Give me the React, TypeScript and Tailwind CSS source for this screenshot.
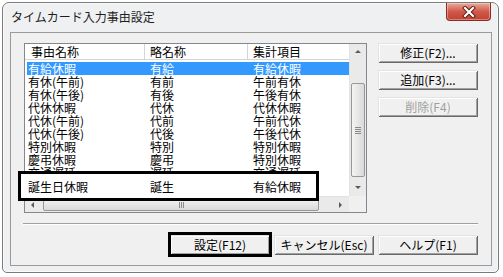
import type { ReactNode } from "react";

const rows: [string, string, string][] = [
  ["有給休暇", "有給", "有給休暇"],
  ["有休(午前)", "有前", "午前有休"],
  ["有休(午後)", "有後", "午後有休"],
  ["代休休暇", "代休", "代休休暇"],
  ["代休(午前)", "代前", "午前代休"],
  ["代休(午後)", "代後", "午後代休"],
  ["特別休暇", "特別", "特別休暇"],
  ["慶弔休暇", "慶弔", "特別休暇"],
  ["交通遅延", "遅延", "交通遅延"],
  ["誕生日休暇", "誕生", "有給休暇"],
  ["", "", ""],
];

function Btn({ children, disabled }: { children: ReactNode; disabled?: boolean }) {
  return (
    <button
      className={
        "w-[100px] h-[20px] flex items-center justify-center bg-[#f0f0f0] text-[12px] leading-none shadow-[inset_1px_1px_0_#e3e3e3,inset_-1px_-1px_0_#696969,inset_2px_2px_0_#ffffff,inset_-2px_-2px_0_#a0a0a0] " +
        (disabled ? "text-[#a0a0a0]" : "text-black")
      }
    >
      {children}
    </button>
  );
}

function Arrow({ dir }: { dir: "up" | "down" | "left" | "right" }) {
  const pts = {
    up: "1,5 4,2 7,5",
    down: "1,2 4,5 7,2",
    left: "5,1 2,4 5,7",
    right: "2,1 5,4 2,7",
  }[dir];
  return (
    <svg width="8" height="8" viewBox="0 0 8 8">
      <polygon points={pts} fill="#5a5a5a" />
    </svg>
  );
}

export default function App() {
  return (
    <div className="w-[503px] h-[277px] bg-white pt-[2px] pl-[2px] font-['Noto_Sans_CJK_JP',sans-serif] text-black">
      <div className="w-[497px] h-[271px] rounded-t-[7px] rounded-b-[5px] border border-[#7b7b7b] bg-[#eff0f2] flex flex-col shadow-[inset_0_0_0_1px_#fafafa]">
        {/* title bar */}
        <div className="h-[29px] flex items-start justify-between shrink-0">
          <div className="pl-[8px] pt-[5px] text-[12px] leading-[18px] text-[#1e1e1e]">タイムカード入力事由設定</div>
          <div className="mr-[7px] w-[45px] h-[18px] rounded-b-[4px] border border-t-0 border-[#8c2b22] bg-gradient-to-b from-[#e9a99c] via-[#d0594a] to-[#c24132] flex items-center justify-center shadow-[inset_0_0_0_1px_rgba(255,255,255,0.35)]">
            <svg width="14" height="12" viewBox="0 0 14 12">
              <path d="M3 2 L11 10 M11 2 L3 10" stroke="#5a1a14" strokeWidth="4" strokeLinecap="square" />
              <path d="M3 2 L11 10 M11 2 L3 10" stroke="#ffffff" strokeWidth="2.2" strokeLinecap="square" />
            </svg>
          </div>
        </div>

        {/* content panel */}
        <div className="relative ml-[7px] w-[482px] h-[234px] border border-[#9b9b9b] bg-[#f0f0f0] pl-[13px] pt-[10px] flex flex-col">
          <div className="flex gap-[11px]">
            {/* list view */}
            <div className="w-[343px] h-[170px] border border-[#828790] bg-white grid grid-cols-[1fr_17px] grid-rows-[1fr_16px]">
              <div className="flex flex-col overflow-hidden">
                <div className="h-[16px] shrink-0 flex border-b border-[#d5d5d5] text-[12px] leading-[15px]">
                  <div className="w-[120px] pl-[6px] border-r border-[#d5d5d5]">事由名称</div>
                  <div className="w-[103px] pl-[5px] border-r border-[#d5d5d5]">略名称</div>
                  <div className="flex-1 pl-[5px]">集計項目</div>
                </div>
                <div className="pt-[2px] pl-[2px] flex flex-col">
                  {rows.map((r, i) => (
                    <div
                      key={i}
                      className={
                        "h-[13px] shrink-0 flex text-[12px] leading-[13px] whitespace-nowrap " +
                        (i === 0 ? "bg-[#3399ff] text-white" : "")
                      }
                    >
                      <div className="w-[120px] pl-[1px]">{r[0]}</div>
                      <div className="w-[103px] pl-[3px]">{r[1]}</div>
                      <div className="flex-1 pl-[3px]">{r[2]}</div>
                    </div>
                  ))}
                </div>
              </div>
              {/* vertical scrollbar */}
              <div className="flex flex-col bg-[#eaeaea] border-l border-[#e2e2e2]">
                <div className="h-[16px] flex items-center justify-center">
                  <Arrow dir="up" />
                </div>
                <div className="flex-1 flex flex-col px-[1px] pt-[23px]">
                  <div className="h-[94px] rounded-[2px] border border-[#979797] bg-gradient-to-r from-[#f4f4f4] to-[#d9d9d9] flex flex-col items-center justify-center gap-[1px]">
                    <div className="w-[6px] h-px bg-[#8a8a8a]" />
                    <div className="w-[6px] h-px bg-[#8a8a8a]" />
                    <div className="w-[6px] h-px bg-[#8a8a8a]" />
                    <div className="w-[6px] h-px bg-[#8a8a8a]" />
                  </div>
                </div>
                <div className="h-[16px] flex items-center justify-center">
                  <Arrow dir="down" />
                </div>
              </div>
              {/* horizontal scrollbar */}
              <div className="flex bg-[#eaeaea] border-t border-[#e2e2e2]">
                <div className="w-[16px] flex items-center justify-center">
                  <Arrow dir="left" />
                </div>
                <div className="flex-1 flex py-[1px] pl-[2px]">
                  <div className="w-[276px] rounded-[2px] border border-[#979797] bg-gradient-to-b from-[#f4f4f4] to-[#d9d9d9] flex items-center justify-center gap-[1px]">
                    <div className="w-px h-[6px] bg-[#8a8a8a]" />
                    <div className="w-px h-[6px] bg-[#8a8a8a]" />
                    <div className="w-px h-[6px] bg-[#8a8a8a]" />
                  </div>
                </div>
                <div className="w-[16px] flex items-center justify-center">
                  <Arrow dir="right" />
                </div>
              </div>
              <div className="bg-[#f0f0f0]" />
            </div>

            {/* side buttons */}
            <div className="flex flex-col gap-[7px]">
              <Btn>修正(F2)...</Btn>
              <Btn>追加(F3)...</Btn>
              <Btn disabled>削除(F4)</Btn>
            </div>
          </div>

          {/* separator */}
          <div className="mt-[10px] -ml-[1px] w-[455px] h-[2px] border-t border-[#a0a0a0] border-b border-b-white" />

          {/* bottom buttons */}
          <div className="mt-[10px] pr-[13px] flex justify-end gap-[4px]">
            <div className="relative">
              <Btn>設定(F12)</Btn>
              <div className="absolute -top-[3px] -bottom-[2px] -left-[2px] -right-[2px] border-[3px] border-black" />
            </div>
            <Btn>キャンセル(Esc)</Btn>
            <Btn>ヘルプ(F1)</Btn>
          </div>

          {/* highlight annotation over the list */}
          <div className="absolute left-[7px] top-[138px] w-[301px] h-[30px] border-[3px] border-black bg-white flex items-center text-[12px] leading-[13px] whitespace-nowrap">
            <div className="w-[129px] pl-[7px]">誕生日休暇</div>
            <div className="w-[103px]">誕生</div>
            <div className="flex-1">有給休暇</div>
          </div>
        </div>
      </div>
    </div>
  );
}
